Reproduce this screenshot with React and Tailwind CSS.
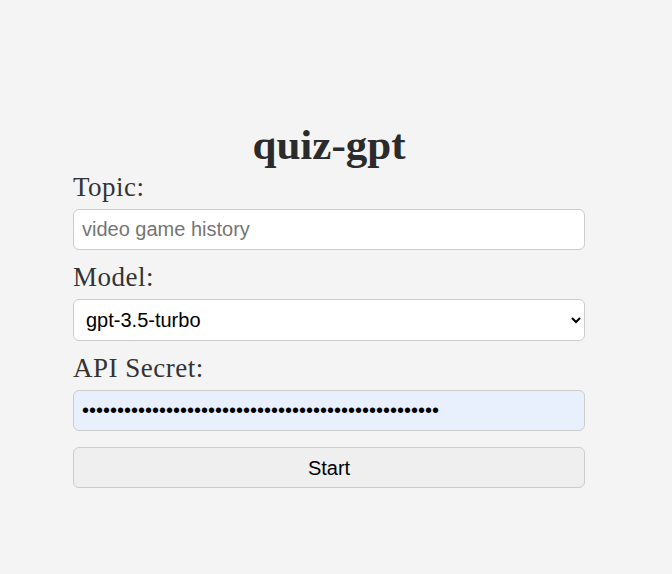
import React, { useState } from "react";

export default function App() {
  const [topic, setTopic] = useState("");
  const [model, setModel] = useState("gpt-3.5-turbo");
  const [secret, setSecret] = useState("sk-".padEnd(51, "x"));

  const serif = { fontFamily: '"Liberation Serif", "DejaVu Serif", serif' };

  return (
    <div className="min-h-[574px] w-full bg-[#f4f4f4] text-[#333]">
      <div className="ml-[73px] w-[512px] pt-[118px]">
        {/* Title */}
        <h1
          style={serif}
          className="h-[53px] text-center text-[43px] font-bold leading-[53px] text-[#2b2b2b]"
        >
          quiz-gpt
        </h1>

        {/* Topic */}
        <label style={serif} className="block h-[38px] text-[27px] leading-[32px] tracking-[0.5px] text-[#333]">
          Topic:
        </label>
        <input
          type="text"
          value={topic}
          onChange={(e) => setTopic(e.target.value)}
          placeholder="video game history"
          className="block h-[41px] w-full rounded-md border border-[#ccc] bg-white px-2 font-['Liberation_Sans',Arial,sans-serif] text-[20px] text-black outline-none placeholder:text-[#757575]"
        />

        {/* Model */}
        <label style={serif} className="mt-[11px] block h-[38px] text-[27px] leading-[32px] tracking-[0.5px] text-[#333]">
          Model:
        </label>
        <select
          value={model}
          onChange={(e) => setModel(e.target.value)}
          className="block h-[42px] w-full rounded-md border border-[#ccc] bg-white px-2 font-['Liberation_Sans',Arial,sans-serif] text-[20px] text-black outline-none"
        >
          <option value="gpt-3.5-turbo">gpt-3.5-turbo</option>
          <option value="gpt-4">gpt-4</option>
        </select>

        {/* API Secret */}
        <label style={serif} className="mt-[11px] block h-[38px] text-[27px] leading-[32px] tracking-[0.5px] text-[#333]">
          API Secret:
        </label>
        <input
          type="password"
          value={secret}
          onChange={(e) => setSecret(e.target.value)}
          className="block h-[41px] w-full rounded-md border border-[#ccc] bg-[#e8f0fe] px-2 font-['Liberation_Sans',Arial,sans-serif] text-[20px] text-black outline-none"
        />

        <button className="mt-4 block h-[41px] w-full rounded-md border border-[#ccc] bg-[#efefef] font-['Liberation_Sans',Arial,sans-serif] text-[20px] text-black">
          Start
        </button>
      </div>
    </div>
  );
}
